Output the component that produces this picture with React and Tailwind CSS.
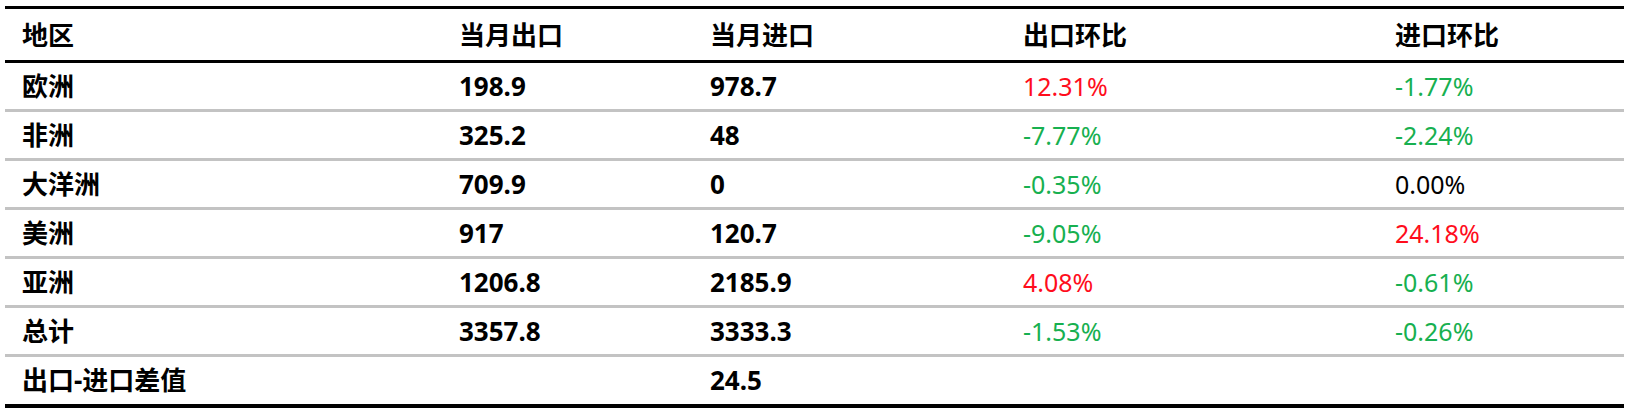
const rows = [
  { region: "欧洲", exp: "198.9", imp: "978.7", expMom: "12.31%", impMom: "-1.77%" },
  { region: "非洲", exp: "325.2", imp: "48", expMom: "-7.77%", impMom: "-2.24%" },
  { region: "大洋洲", exp: "709.9", imp: "0", expMom: "-0.35%", impMom: "0.00%" },
  { region: "美洲", exp: "917", imp: "120.7", expMom: "-9.05%", impMom: "24.18%" },
  { region: "亚洲", exp: "1206.8", imp: "2185.9", expMom: "4.08%", impMom: "-0.61%" },
  { region: "总计", exp: "3357.8", imp: "3333.3", expMom: "-1.53%", impMom: "-0.26%" },
];

function tone(value) {
  if (value.startsWith("-")) return "text-[#17b050]";
  if (parseFloat(value) === 0) return "text-black";
  return "text-[#ff0d1c]";
}

function App() {
  return (
    <div
      className="bg-white w-[1632px] h-[410px] pl-[5px] pt-[6px]"
      style={{ fontFamily: '"Noto Sans", "Noto Sans CJK SC", sans-serif' }}
    >
      <table className="w-[1619px] border-collapse table-fixed text-black leading-none">
        <colgroup>
          <col className="w-[439px]" />
          <col className="w-[251px]" />
          <col className="w-[313px]" />
          <col className="w-[372px]" />
          <col className="w-[244px]" />
        </colgroup>
        <thead>
          <tr className="h-[54px] border-t-[3px] border-b-[3px] border-black text-left text-[26px]">
            <th className="pl-[17px] font-bold">地区</th>
            <th className="pl-[15px] font-bold">当月出口</th>
            <th className="pl-[15px] font-bold">当月进口</th>
            <th className="pl-[15px] font-bold">出口环比</th>
            <th className="pl-[15px] font-bold">进口环比</th>
          </tr>
        </thead>
        <tbody>
          {rows.map((row) => (
            <tr key={row.region} className="h-[49px] border-b-[3px] border-[#c3c3c3]">
              <td className="pl-[17px] font-bold text-[26px]">{row.region}</td>
              <td className="pl-[15px] font-bold text-[26px]">{row.exp}</td>
              <td className="pl-[15px] font-bold text-[26px]">{row.imp}</td>
              <td className={`pl-[15px] text-[25px] ${tone(row.expMom)}`}>{row.expMom}</td>
              <td className={`pl-[15px] text-[25px] ${tone(row.impMom)}`}>{row.impMom}</td>
            </tr>
          ))}
          <tr className="h-[50px] border-b-4 border-black">
            <td className="pl-[17px] font-bold text-[26px]">出口-进口差值</td>
            <td className="pl-[15px]"></td>
            <td className="pl-[15px] font-bold text-[26px]">24.5</td>
            <td className="pl-[15px]"></td>
            <td className="pl-[15px]"></td>
          </tr>
        </tbody>
      </table>
    </div>
  );
}

export default App;
